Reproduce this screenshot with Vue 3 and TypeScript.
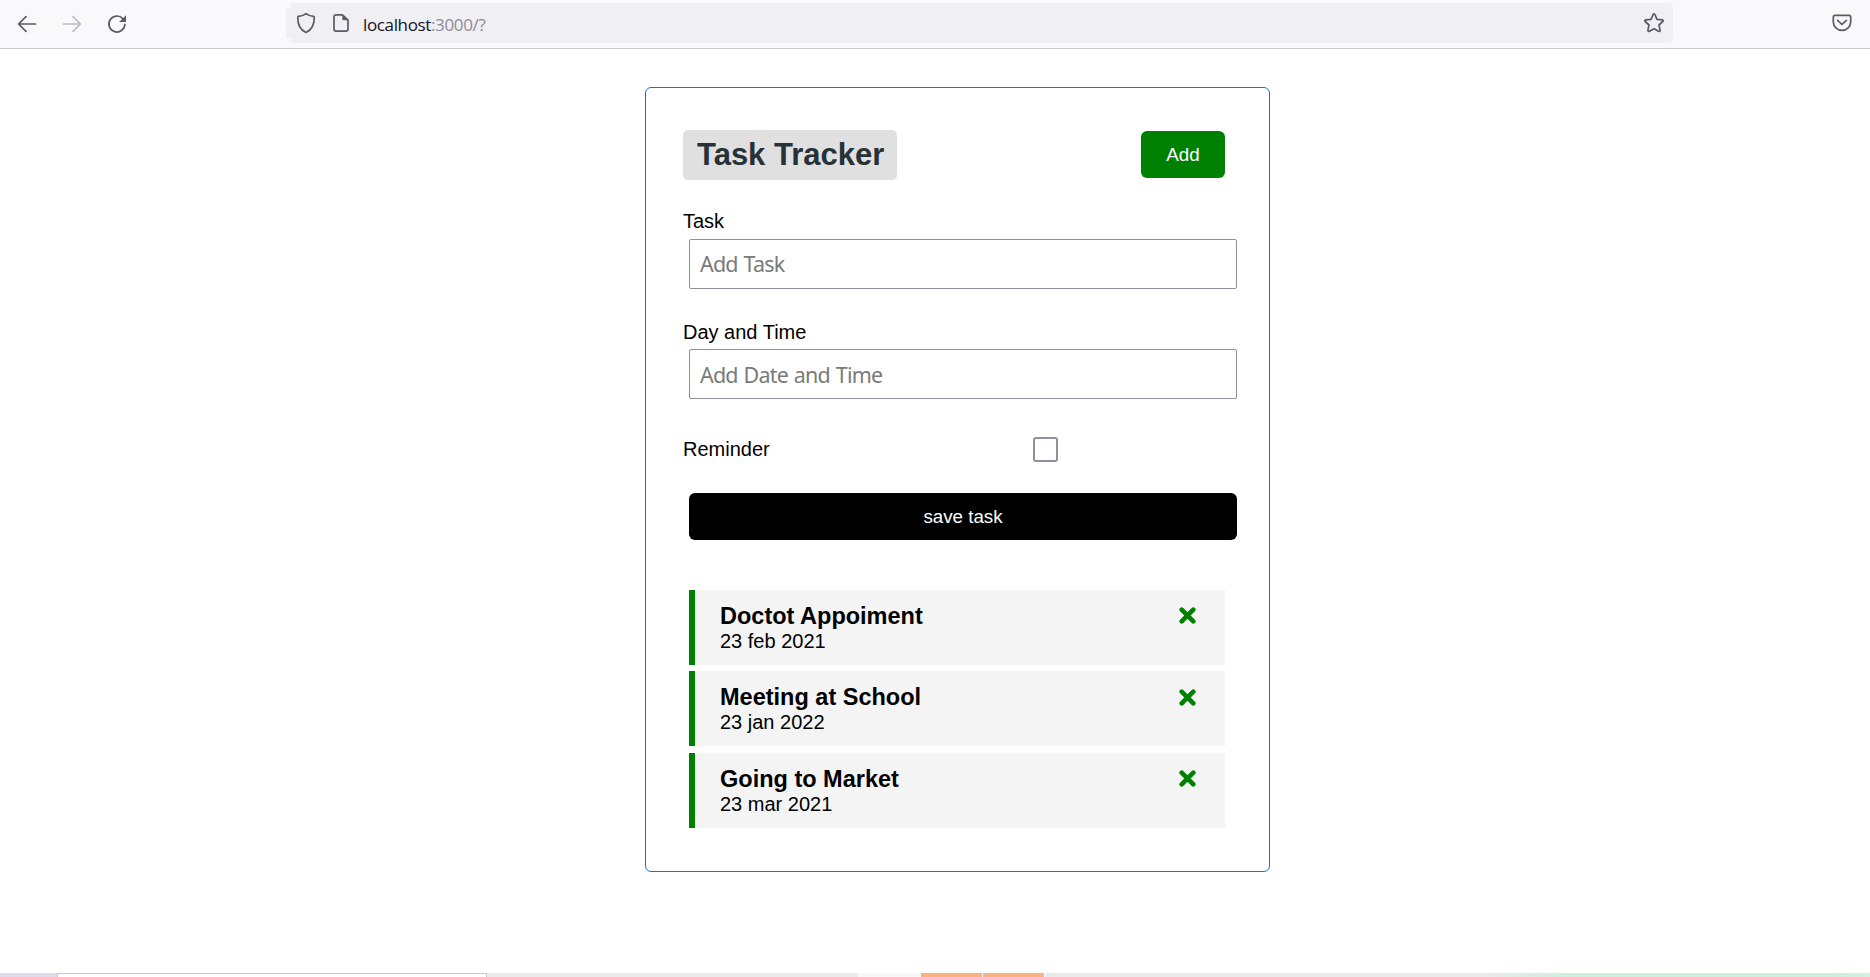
<script setup lang="ts">
import { ref } from 'vue'

interface Task {
  id: number
  text: string
  day: string
}

const tasks = ref<Task[]>([
  { id: 1, text: 'Doctot Appoiment', day: '23 feb 2021' },
  { id: 2, text: 'Meeting at School', day: '23 jan 2022' },
  { id: 3, text: 'Going to Market', day: '23 mar 2021' },
])

const text = ref('')
const day = ref('')
const reminder = ref(false)

function removeTask(id: number): void {
  tasks.value = tasks.value.filter((task) => task.id !== id)
}

function saveTask(): void {
  if (!text.value) return
  tasks.value.push({ id: Date.now(), text: text.value, day: day.value })
  text.value = ''
  day.value = ''
  reminder.value = false
}
</script>

<template>
  <div class="window">
    <header class="toolbar">
      <nav class="nav">
        <svg class="icon" width="20" height="20" viewBox="0 0 20 20">
          <path d="M18.5 10H1.8M9 2.6 1.6 10 9 17.4" />
        </svg>
        <svg class="icon disabled" width="20" height="20" viewBox="0 0 20 20">
          <path d="M1.5 10h16.7M11 2.6 18.4 10 11 17.4" />
        </svg>
        <svg class="icon" width="20" height="20" viewBox="0 0 20 20">
          <path d="M17.9 10.3A8 8 0 1 1 15.8 4.6L17 5.9" />
          <path class="solid" d="M19 1.2v6.3q0 .6-.6.6h-6.2z" />
        </svg>
      </nav>
      <div class="address">
        <div class="address-tab">
          <svg class="icon shield" width="20" height="22" viewBox="0 0 20 22">
            <path d="M10 1.6C7.6 3.4 5 4.3 2.4 4.4Q1.8 4.5 1.8 5.2C1.6 12.500 4.500 18 10 20.500C15.500 18 18.400 12.500 18.200 5.200Q18.200 4.500 17.600 4.400C15 4.300 12.400 3.400 10 1.600Z" />
          </svg>
        </div>
        <div class="address-field">
          <svg class="icon doc" width="16" height="20" viewBox="0 0 16 20">
            <path d="M9.500 1.900H3.200Q1 1.900 1 4.100V15.900Q1 18.100 3.200 18.100H12.800Q15 18.100 15 15.900V7Z" />
            <path class="solid" d="M9.300 1.300 15.600 7.300H10.300Q9.300 7.300 9.300 6.300Z" />
          </svg>
          <span class="url"><b>localhost</b>:3000/?</span>
          <svg class="icon star" width="22" height="22" viewBox="0 0 22 22">
            <path d="M10.100 2.500q.9-1.500 1.800 0L14 7.300l5.200.5q1.600.5.600 1.700L16 13l1.100 5.100q0 1.700-1.500 1.200L11 16.700l-4.600 2.600q-1.500.5-1.500-1.200L6 13 2.200 9.500q-1-1.200.6-1.700L8 7.300Z" />
          </svg>
        </div>
      </div>
      <svg class="icon pocket" width="20" height="18" viewBox="0 0 20 18">
        <path d="M3 1.400H17Q18.700 1.400 18.700 3.100V8A8.700 8.300 0 0 1 1.300 8V3.100Q1.300 1.400 3 1.400Z" />
        <path d="M5.600 6.300 10 10.500 14.400 6.300" />
      </svg>
    </header>

    <main class="page">
      <section class="container">
        <div class="header">
          <h1>Task Tracker</h1>
          <button class="btn add" type="button">Add</button>
        </div>
        <form class="form" @submit.prevent="saveTask">
          <div class="control">
            <label for="task">Task</label>
            <input id="task" v-model="text" type="text" placeholder="Add Task" />
          </div>
          <div class="control day">
            <label for="day">Day and Time</label>
            <input id="day" v-model="day" type="text" placeholder="Add Date and Time" />
          </div>
          <div class="control check">
            <label for="reminder">Reminder</label>
            <input id="reminder" v-model="reminder" type="checkbox" />
          </div>
          <button class="btn save" type="submit">save task</button>
        </form>
        <div class="tasks">
          <article v-for="task in tasks" :key="task.id" class="task">
            <div>
              <h3>{{ task.text }}</h3>
              <p>{{ task.day }}</p>
            </div>
            <svg class="remove" width="17" height="17" viewBox="0 0 17 17" @click="removeTask(task.id)">
              <path d="M2.700 2.700 14.300 14.300M14.300 2.700 2.700 14.300" />
            </svg>
          </article>
        </div>
      </section>
    </main>

    <footer class="strip">
      <i class="lilac"></i>
      <i class="panel"></i>
      <i class="gray"></i>
      <i class="pale"></i>
      <i class="orange"></i>
      <i class="orange"></i>
      <i class="fade"></i>
    </footer>
  </div>
</template>

<style>
body {
  margin: 0;
  background: #fff;
}
</style>

<style scoped>
* {
  box-sizing: border-box;
}
.window {
  display: flex;
  flex-direction: column;
  height: 977px;
  overflow: hidden;
  font-family: "Liberation Sans", Arial, sans-serif;
  font-size: 20px;
  line-height: 23px;
  color: #000;
}
.toolbar {
  display: flex;
  align-items: flex-start;
  flex: none;
  height: 49px;
  background: #f9f9fb;
  border-bottom: 1px solid #ccc;
}
.icon {
  flex: none;
  fill: none;
  stroke: #5b5b66;
  stroke-width: 1.7;
  stroke-linecap: round;
  stroke-linejoin: round;
}
.icon .solid {
  fill: #5b5b66;
  stroke: none;
}
.disabled {
  stroke: #bcbcc2;
}
.nav {
  display: flex;
  gap: 25px;
  width: 286px;
  padding: 14px 0 0 17px;
}
.address {
  display: flex;
  align-items: flex-start;
  width: 1387px;
}
.address-tab {
  flex: none;
  width: 5px;
  height: 30px;
  margin-top: 8px;
  background: #f0eff4;
}
.shield {
  display: block;
  position: relative;
  z-index: 1;
  margin: 4px 0 0 10px;
}
.address-tab::before {
  content: "";
  display: table;
}
.address-field {
  display: flex;
  flex: 1;
  height: 40px;
  margin-top: 3px;
  padding: 0 8px 0 42px;
  background: #f0eff4;
  border-radius: 0 5px 5px 0;
}
.doc {
  margin-top: 10px;
}
.url {
  flex: 1;
  margin: 10px 0 0 14px;
  font-family: "Open Sans", "Noto Sans", sans-serif;
  font-size: 17px;
  letter-spacing: -0.36px;
  color: #8c8c94;
}
.url b {
  font-weight: 400;
  color: #15141a;
}
.star {
  margin-top: 9px;
}
.pocket {
  margin: 14px 0 0 159px;
}
.page {
  flex: 1;
  padding-top: 38px;
}
.container {
  width: 625px;
  height: 785px;
  margin: 0 0 0 645px;
  padding: 42px 44px 0 37px;
  border: 1px solid #0f78cc;
  border-radius: 6px;
}
.header {
  display: flex;
  justify-content: space-between;
  align-items: flex-start;
  height: 80px;
}
h1 {
  width: 214px;
  height: 50px;
  margin: 0;
  padding-left: 14px;
  font-size: 31px;
  line-height: 49px;
  white-space: nowrap;
  color: #263238;
  background: #e0e0e0;
  border-radius: 5px;
}
.btn {
  height: 47px;
  padding: 0;
  border: 0;
  border-radius: 6px;
  font-family: inherit;
  font-size: 18.75px;
  color: #fff;
}
.add {
  width: 84px;
  margin-top: 1px;
  background: green;
}
.form {
  width: 554px;
}
.control {
  height: 111px;
}
.control label {
  display: block;
}
.control input[type="text"] {
  display: block;
  width: 548px;
  height: 50px;
  margin: 6px 0 0 6px;
  padding: 0 10px 2px;
  border: 1px solid #8f8f9d;
  border-radius: 2px;
  font-family: "Noto Sans", "Open Sans", sans-serif;
  font-size: 21.5px;
  letter-spacing: -0.8px;
  word-spacing: 1px;
  background: #fff;
  outline: none;
}
.control.day input[type="text"] {
  margin-top: 5px;
  padding-bottom: 0;
}
.control input::placeholder {
  color: #7a7a7a;
  opacity: 1;
}
.check {
  display: flex;
  align-items: flex-start;
  height: 61px;
  padding-top: 5px;
}
.check label {
  width: 350px;
  padding-top: 1px;
}
.check input {
  appearance: none;
  width: 25px;
  height: 25px;
  margin: 0;
  border: 2px solid #8f8f9d;
  border-radius: 3px;
  background: #fff;
}
.save {
  display: block;
  width: 548px;
  margin-left: 6px;
  background: #000;
}
.tasks {
  display: grid;
  gap: 6.25px;
  margin: 50px 0 0 6px;
}
.task {
  display: flex;
  justify-content: space-between;
  height: 75px;
  padding: 13px 29px 0 25px;
  background: #f4f4f4;
  border-left: 6px solid green;
}
h3 {
  margin: 0;
  font-size: 23.5px;
  line-height: 27px;
}
p {
  margin: 0;
  line-height: 23px;
}
.remove {
  margin-top: 4.3px;
  fill: none;
  stroke: green;
  stroke-width: 4.6;
  stroke-linecap: round;
}
.strip {
  display: flex;
  flex: none;
  height: 4px;
}
.lilac {
  width: 57px;
  background: #dddaea;
}
.panel {
  width: 430px;
  border: 1px solid #c8c8c8;
  border-bottom: 0;
}
.gray {
  width: 371px;
  background: #ebebeb;
}
.pale {
  width: 63px;
  background: #f8f8f8;
}
.orange {
  width: 61px;
  margin-right: 1px;
  background: #fab27e;
}
.fade {
  flex: 1;
  background: linear-gradient(90deg, #ebebeb 0, #ebebeb 53%, #cfeede 63%, #cfeede 96%, #d6f1dc 100%);
}
</style>
